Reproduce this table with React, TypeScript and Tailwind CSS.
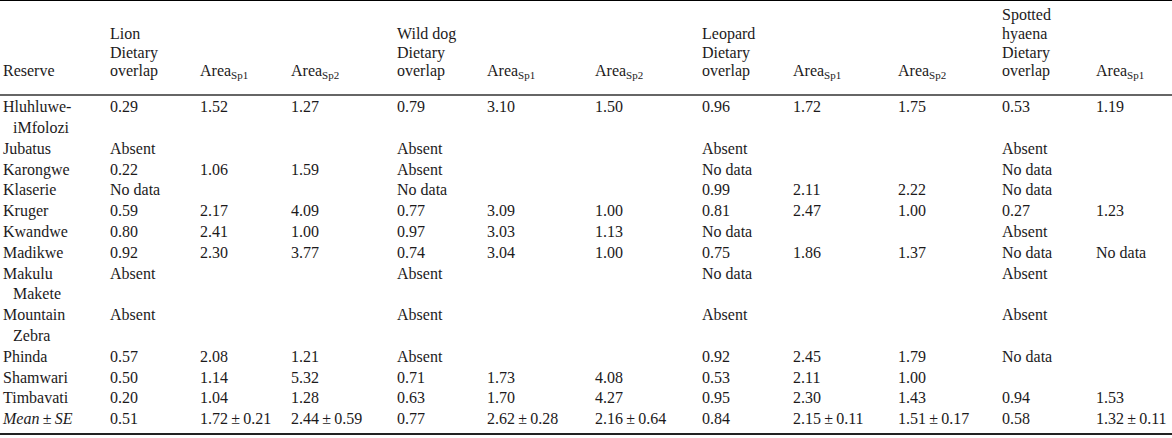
const serif = { fontFamily: '"Liberation Serif", "Times New Roman", serif' };

type Cell = string;

const rows: { name: string[]; cells: Cell[] }[] = [
  { name: ["Hluhluwe-", "iMfolozi"], cells: ["0.29", "1.52", "1.27", "0.79", "3.10", "1.50", "0.96", "1.72", "1.75", "0.53", "1.19"] },
  { name: ["Jubatus"], cells: ["Absent", "", "", "Absent", "", "", "Absent", "", "", "Absent", ""] },
  { name: ["Karongwe"], cells: ["0.22", "1.06", "1.59", "Absent", "", "", "No data", "", "", "No data", ""] },
  { name: ["Klaserie"], cells: ["No data", "", "", "No data", "", "", "0.99", "2.11", "2.22", "No data", ""] },
  { name: ["Kruger"], cells: ["0.59", "2.17", "4.09", "0.77", "3.09", "1.00", "0.81", "2.47", "1.00", "0.27", "1.23"] },
  { name: ["Kwandwe"], cells: ["0.80", "2.41", "1.00", "0.97", "3.03", "1.13", "No data", "", "", "Absent", ""] },
  { name: ["Madikwe"], cells: ["0.92", "2.30", "3.77", "0.74", "3.04", "1.00", "0.75", "1.86", "1.37", "No data", "No data"] },
  { name: ["Makulu", "Makete"], cells: ["Absent", "", "", "Absent", "", "", "No data", "", "", "Absent", ""] },
  { name: ["Mountain", "Zebra"], cells: ["Absent", "", "", "Absent", "", "", "Absent", "", "", "Absent", ""] },
  { name: ["Phinda"], cells: ["0.57", "2.08", "1.21", "Absent", "", "", "0.92", "2.45", "1.79", "No data", ""] },
  { name: ["Shamwari"], cells: ["0.50", "1.14", "5.32", "0.71", "1.73", "4.08", "0.53", "2.11", "1.00", "", ""] },
  { name: ["Timbavati"], cells: ["0.20", "1.04", "1.28", "0.63", "1.70", "4.27", "0.95", "2.30", "1.43", "0.94", "1.53"] },
];

const pm = (a: string, b: string) => `${a}\u2009±\u2009${b}`;

const mean = ["0.51", pm("1.72", "0.21"), pm("2.44", "0.59"), "0.77", pm("2.62", "0.28"), pm("2.16", "0.64"), "0.84", pm("2.15", "0.11"), pm("1.51", "0.17"), "0.58", pm("1.32", "0.11")];

const widths = ["w-[107px]", "w-[90px]", "w-[91px]", "w-[106px]", "w-[90px]", "w-[108px]", "w-[107px]", "w-[91px]", "w-[105px]", "w-[104px]", "w-[94px]", "w-[79px]"];

function Area({ n }: { n: string }) {
  return (
    <>
      Area<sub className="text-[11px]">Sp{n}</sub>
    </>
  );
}

function Overlap({ lines }: { lines: string[] }) {
  return (
    <>
      {lines.map((l, i) => (
        <div key={i}>{l}</div>
      ))}
      <div>Dietary</div>
      <div>overlap</div>
    </>
  );
}

export default function App() {
  const th = "pl-[3px] pr-1 pt-[5px] pb-[13px] align-bottom text-left font-normal";
  const td = "pl-[3px] pr-1 align-top";

  return (
    <div className="w-[1172px] h-[438px] bg-white text-[#1c1a1b] text-[16px]" style={serif}>
      <table className="w-[1172px] table-fixed border-collapse border-t-[1.5px] border-b-2 border-t-black border-b-[#222]">
        <colgroup>
          {widths.map((w, i) => (
            <col key={i} className={w} />
          ))}
        </colgroup>
        <thead className="leading-[18.8px]">
          <tr className="border-b-2 border-[#666]">
            <th className={th}>Reserve</th>
            <th className={th}><Overlap lines={["Lion"]} /></th>
            <th className={th}><Area n="1" /></th>
            <th className={th}><Area n="2" /></th>
            <th className={th}><Overlap lines={["Wild dog"]} /></th>
            <th className={th}><Area n="1" /></th>
            <th className={th}><Area n="2" /></th>
            <th className={th}><Overlap lines={["Leopard"]} /></th>
            <th className={th}><Area n="1" /></th>
            <th className={th}><Area n="2" /></th>
            <th className={th}><Overlap lines={["Spotted", "hyaena"]} /></th>
            <th className={th}><Area n="1" /></th>
          </tr>
        </thead>
        <tbody className="leading-[20.8px]">
          {rows.map((r, ri) => (
            <tr key={r.name.join(" ")}>
              <td className={`${td} ${ri === 0 ? "pt-px" : ""}`}>
                <div>{r.name[0]}</div>
                {r.name[1] && <div className="pl-[10px]">{r.name[1]}</div>}
              </td>
              {r.cells.map((c, i) => (
                <td key={i} className={`${td} whitespace-nowrap ${ri === 0 ? "pt-px" : ""}`}>
                  {c}
                </td>
              ))}
            </tr>
          ))}
          <tr>
            <td className={`${td} pb-[3px]`}>
              <i>Mean</i>
              {"\u2009±\u2009"}
              <i>SE</i>
            </td>
            {mean.map((c, i) => (
              <td key={i} className={`${td} whitespace-nowrap pb-[3px]`}>
                {c}
              </td>
            ))}
          </tr>
        </tbody>
      </table>
    </div>
  );
}
